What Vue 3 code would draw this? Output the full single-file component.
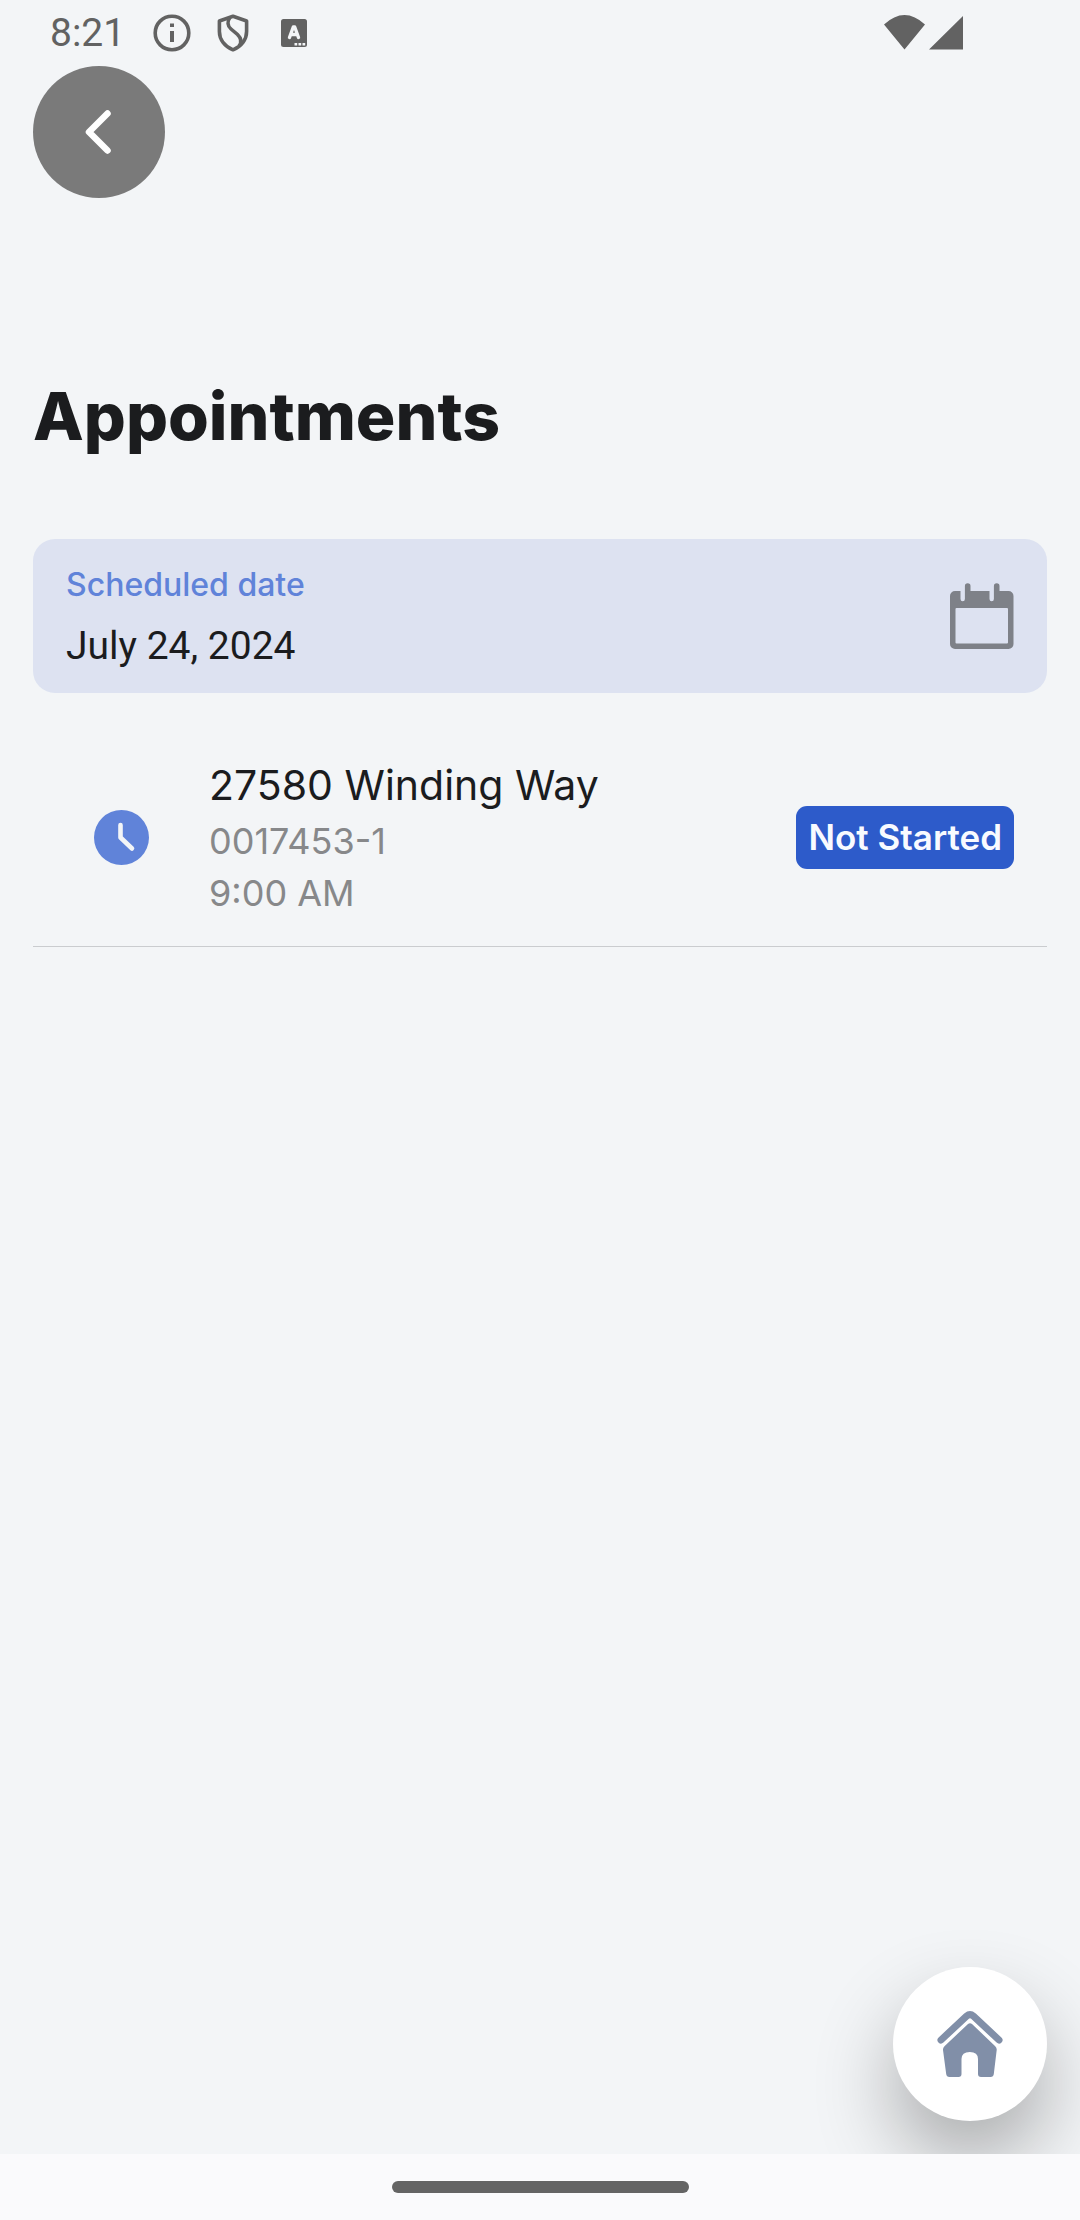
<script setup>
import { ref } from 'vue'

const scheduledDate = ref('July 24, 2024')
const appointments = [
  { id: '0017453-1', address: '27580 Winding Way', time: '9:00 AM', status: 'Not Started' },
]
</script>

<template>
  <div class="screen">
    <header class="status-bar">
      <span class="time">8:21</span>
      <svg class="status-icon" viewBox="0 0 38 38" aria-hidden="true">
        <circle cx="19" cy="19" r="16.8" fill="none" stroke="currentColor" stroke-width="3.6" />
        <path d="M17 9.5h4v3.6h-4zM17 17h4v11h-4z" fill="currentColor" />
      </svg>
      <svg class="status-icon" viewBox="0 0 38 38" aria-hidden="true">
        <path
          d="M19 2.2 32.6 7v10.5c0 8-5.2 14.8-13.6 18.3C10.6 32.3 5.4 25.5 5.4 17.5V7z"
          fill="none" stroke="currentColor" stroke-width="3.6" stroke-linejoin="round"
        />
        <path
          d="M16 3.500c-3 4-2.500 8.500 1 11.500l6.500 5.500c4 4 4.400 8 1.500 11.500"
          fill="none" stroke="currentColor" stroke-width="3.6"
        />
      </svg>
      <svg class="status-icon" viewBox="0 0 38 38" aria-hidden="true">
        <rect x="6" y="5" width="26" height="28" rx="2.5" fill="currentColor" />
        <path
          d="M14.500 23.500 18.300 13h1.400L23.500 23.500M15.800 20.500h6.400"
          fill="none" stroke="#f3f5f7" stroke-width="3.4" stroke-linecap="round" stroke-linejoin="round"
        />
        <path d="M19.500 29h2.700v2.400h-2.700zM23.500 29h2.700v2.400h-2.700zM27.500 29h2.700v2.400h-2.700z" fill="#f3f5f7" />
      </svg>
      <svg class="signal" viewBox="0 0 80 36" aria-hidden="true">
        <path d="M0 9.5Q20.500-9.500 41 9.500L20.500 34.500zM79 1V34.500H45z" fill="currentColor" />
      </svg>
    </header>

    <main class="content">
      <button class="back" type="button" aria-label="Back">
        <svg viewBox="0 0 132 132" aria-hidden="true">
          <path
            d="M74.5 47.5 56 66l18.5 18.5"
            fill="none" stroke="#fff" stroke-width="6.5" stroke-linecap="round" stroke-linejoin="round"
          />
        </svg>
      </button>

      <h1>Appointments</h1>

      <div class="date-field">
        <div class="date-text">
          <label for="scheduled-date">Scheduled date</label>
          <input id="scheduled-date" v-model="scheduledDate" type="text" readonly />
        </div>
        <button class="calendar" type="button" aria-label="Choose date">
          <svg viewBox="0 0 64 66" aria-hidden="true">
            <path
              fill="currentColor" fill-rule="evenodd"
              d="M5 8h5.500v8a2.200 2.200 0 0 0 4.400 0V3a2.700 2.700 0 0 1 5.600 0v5h19v8a2.200 2.200 0 0 0 4.400 0V3a2.700 2.700 0 0 1 5.600 0v5H58.500a5 5 0 0 1 5 5v48a5 5 0 0 1-5 5H5a5 5 0 0 1-5-5V13a5 5 0 0 1 5-5zM6.500 25a1 1 0 0 0-1 1v33.500a1 1 0 0 0 1 1H57a1 1 0 0 0 1-1V26a1 1 0 0 0-1-1z"
            />
          </svg>
        </button>
      </div>

      <ul class="appointments">
        <li v-for="item in appointments" :key="item.id">
          <svg class="clock" viewBox="0 0 55 55" aria-hidden="true">
            <circle cx="27.5" cy="27.5" r="27.5" fill="#6083d9" />
            <path
              d="M26.500 15v12.500L38 38.500"
              fill="none" stroke="#f3f5f7" stroke-width="4.6" stroke-linecap="round" stroke-linejoin="round"
            />
          </svg>
          <div class="details">
            <h2>{{ item.address }}</h2>
            <p>{{ item.id }}</p>
            <p>{{ item.time }}</p>
          </div>
          <span class="badge">{{ item.status }}</span>
        </li>
      </ul>

      <button class="home" type="button" aria-label="Home">
        <svg viewBox="0 0 66 66" aria-hidden="true">
          <path
            d="M4 29 29.5 5.2q3.5-3 7 0L62 29"
            fill="none" stroke="#818fa8" stroke-width="7" stroke-linecap="round"
          />
          <path
            d="M31 13q2-1.500 4 0l23 22q2 2 1.700 4l-2.900 24q-.3 3-3.300 3H44q-3 0-3-3V48q0-7-8.200-7T24.500 48v15q0 3-3 3H12.500q-3 0-3.300-3L6 39q-.3-2 1.700-4z"
            fill="#818fa8"
          />
        </svg>
      </button>
    </main>

    <footer class="nav-bar"><div class="handle"></div></footer>
  </div>
</template>

<style>
body {
  background: #f3f5f7;
}
</style>

<style scoped>
.screen {
  display: flex;
  flex-direction: column;
  min-height: 100vh;
  background: #f3f5f7;
  color: #1b1c1e;
  font-family: Inter, "Liberation Sans", sans-serif;
}

h1,
h2,
p,
ul {
  margin: 0;
  padding: 0;
}

button,
input {
  padding: 0;
  border: 0;
  background: none;
  color: inherit;
}

svg {
  display: block;
}

.status-bar {
  display: flex;
  align-items: center;
  height: 66px;
  padding: 0 116px 0 50px;
  color: #626262;
}

.time {
  margin-right: 28px;
  font: 39px/66px Roboto, sans-serif;
}

.status-icon {
  width: 38px;
  height: 38px;
  margin-right: 23px;
}

.signal {
  width: 80px;
  height: 36px;
  margin-left: auto;
}

.content {
  display: flex;
  flex: 1;
  flex-direction: column;
  padding: 0 33px 33px;
  overflow: hidden;
}

.back {
  width: 132px;
  height: 132px;
  border-radius: 50%;
  background: #7a7a7a;
}

h1 {
  margin: 178px 0 83px;
  font-size: 66px;
  font-weight: 800;
  line-height: 80px;
}

.date-field {
  display: flex;
  align-items: center;
  gap: 33px;
  padding: 16px 33px;
  border-radius: 22px;
  background: #dde2f1;
}

.date-text {
  display: flex;
  flex: 1;
  flex-direction: column;
  min-width: 0;
}

label {
  color: #6083d9;
  font-size: 32px;
  font-weight: 500;
  line-height: 60px;
}

input {
  width: 100%;
  height: 62px;
  font: 39px/62px Roboto, sans-serif;
}

.calendar {
  color: #7e8188;
}

.calendar svg {
  width: 64px;
  height: 66px;
}

.appointments {
  list-style: none;
}

.appointments li {
  display: flex;
  align-items: center;
  padding: 62px 33px 27px 61px;
  border-bottom: 1px solid #cacccf;
}

.clock {
  width: 55px;
  height: 55px;
  margin-right: 60px;
}

.details {
  flex: 1;
}

h2 {
  font-size: 41px;
  font-weight: 400;
  line-height: 60px;
}

p {
  color: #87888a;
  font-size: 36px;
  line-height: 52px;
}

.badge {
  padding: 0 12px;
  border-radius: 11px;
  background: #2d5bca;
  color: #f8faff;
  font-size: 35px;
  font-weight: 600;
  line-height: 63px;
}

.home {
  display: flex;
  align-items: center;
  justify-content: center;
  align-self: flex-end;
  width: 154px;
  height: 154px;
  margin-top: auto;
  border-radius: 50%;
  background: #fff;
  box-shadow: 0 40px 80px rgba(0, 0, 0, 0.3);
}

.home svg {
  width: 66px;
  height: 66px;
}

.nav-bar {
  display: flex;
  align-items: center;
  justify-content: center;
  height: 66px;
  background: #fafafc;
}

.handle {
  width: 297px;
  height: 12px;
  border-radius: 6px;
  background: #646464;
}
</style>
